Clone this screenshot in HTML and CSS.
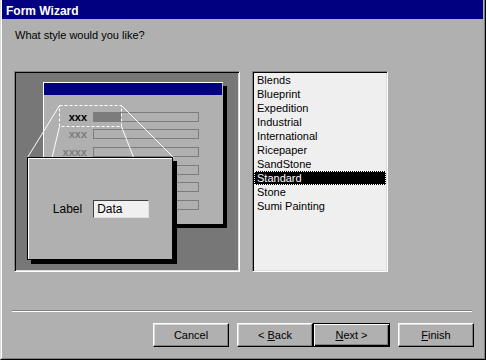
FILE: index.html
```html
<!DOCTYPE html>
<html lang="en">
<head>
    <meta charset="UTF-8">
    <title>Form Wizard</title>
    <link rel="stylesheet" href="styles.css">
</head>
<body>
    <div class="window">
        <div class="frame">
            <div class="titlebar">Form Wizard</div>
            <div class="content">
                <p class="prompt">What style would you like?</p>

                <div class="main">
                    <!-- Style preview -->
                    <div class="preview">
                        <div class="mock">
                            <div class="mock-title"></div>
                            <div class="mock-rows">
                                <div class="mock-row"><span class="mock-label current">xxx</span><span class="mock-field"><span class="mock-fill"></span></span></div>
                                <div class="mock-row"><span class="mock-label">xxx</span><span class="mock-field"></span></div>
                                <div class="mock-row"><span class="mock-label">xxxx</span><span class="mock-field"></span></div>
                                <!-- labels of the lower rows sit behind the zoom box -->
                                <div class="mock-row"><span class="mock-label"></span><span class="mock-field"></span></div>
                                <div class="mock-row"><span class="mock-label"></span><span class="mock-field"></span></div>
                                <div class="mock-row"><span class="mock-label"></span><span class="mock-field"></span></div>
                            </div>
                        </div>
                        <svg class="zoom-lines" width="224" height="199" viewBox="0 0 224 199">
                            <rect x="44.5" y="33.5" width="62" height="21" fill="none" stroke="#fff" stroke-dasharray="3 2"/>
                            <g stroke="#fff" stroke-width="1">
                                <line x1="44.5" y1="33.5" x2="12.5" y2="85.5"/>
                                <line x1="106.5" y1="33.5" x2="158.5" y2="85.5"/>
                                <line x1="44.5" y1="54.5" x2="12.5" y2="188"/>
                                <line x1="106.5" y1="54.5" x2="158.5" y2="188"/>
                            </g>
                        </svg>
                        <div class="zoom-box">
                            <span class="zoom-label">Label</span>
                            <span class="zoom-data">Data</span>
                        </div>
                    </div>

                    <!-- Style list -->
                    <ul class="style-list">
                        <li>Blends</li>
                        <li>Blueprint</li>
                        <li>Expedition</li>
                        <li>Industrial</li>
                        <li>International</li>
                        <li>Ricepaper</li>
                        <li>SandStone</li>
                        <li class="selected">Standard</li>
                        <li>Stone</li>
                        <li>Sumi Painting</li>
                    </ul>
                </div>

                <div class="separator"></div>

                <div class="buttons">
                    <button class="btn">Cancel</button>
                    <div class="btn-pair">
                        <button class="btn">&lt; <u>B</u>ack</button>
                        <button class="btn default"><u>N</u>ext &gt;</button>
                    </div>
                    <button class="btn"><u>F</u>inish</button>
                </div>
            </div>
        </div>
    </div>
</body>
</html>
```

FILE: styles.css
```css
body {
    margin: 0;
    font-family: "Liberation Sans", Arial, sans-serif;
    font-size: 11px;
    background-color: #b0b0b0;
}
.window {
    width: 486px;
    height: 360px;
    box-sizing: border-box;
    border-left: 1px solid #dcdcdc;
    border-right: 1px solid #000;
    border-bottom: 1px solid #000;
    background-color: #b0b0b0;
}
.frame {
    height: 100%;
    box-sizing: border-box;
    border-left: 1px solid #fff;
    border-right: 1px solid #808080;
    border-bottom: 1px solid #808080;
}
.titlebar {
    height: 19px;
    box-sizing: border-box;
    margin-right: 1px;
    padding: 3px 0 0 4px;
    line-height: 16px;
    background-color: #000080;
    color: #fff;
    font-weight: bold;
    font-size: 12px;
}
.content {
    padding: 0 10px 0 12px;
}
.prompt {
    margin: 10px 0 0 1px;
    line-height: 13px;
    color: #000;
}
.main {
    display: flex;
    gap: 12px;
    margin-top: 29px;
}
.preview {
    position: relative;
    width: 226px;
    height: 201px;
    box-sizing: border-box;
    padding: 10px 0 0 28px;
    border: 1px solid;
    border-color: #808080 #fff #fff #808080;
    box-shadow: inset 1px 1px 0 #000, inset -1px -1px 0 #dcdcdc;
    background-color: #777;
}
.mock {
    width: 180px;
    height: 142px;
    box-sizing: border-box;
    border-top: 1px solid #fff;
    border-left: 1px solid #fff;
    background-color: #b0b0b0;
    box-shadow: 4px 4px 0 #000;
}
.mock-title {
    height: 12px;
    margin-right: 1px;
    background-color: #000080;
}
.mock-rows {
    display: flex;
    flex-direction: column;
    padding-top: 13px;
}
.mock-row {
    display: flex;
    align-items: center;
    gap: 6px;
    height: 17.6px;
}
.mock-label {
    width: 43px;
    text-align: right;
    font-weight: bold;
    line-height: 10px;
    color: #7c7c7c;
}
.mock-label.current {
    color: #000;
}
.mock-field {
    display: flex;
    width: 106px;
    height: 10px;
    box-sizing: border-box;
    border: 1px solid #7c7c7c;
}
.mock-fill {
    width: 27px;
    background-color: #7c7c7c;
}
.zoom-lines {
    position: absolute;
    left: 0;
    top: 0;
}
.zoom-box {
    position: absolute;
    left: 12px;
    top: 85px;
    width: 146px;
    height: 103px;
    box-sizing: border-box;
    display: flex;
    align-items: center;
    justify-content: center;
    gap: 11px;
    padding-left: 2px;
    border: 1px solid #000;
    background-color: #b0b0b0;
    box-shadow: inset 1px 1px 0 #fff, 4px 4px 0 #000;
}
.zoom-data {
    width: 56px;
    height: 18px;
    box-sizing: border-box;
    padding-left: 3px;
    line-height: 16px;
    border: 1px solid;
    border-color: #404040 #e0e0e0 #e0e0e0 #404040;
    background-color: #f0f0f0;
    font-size: 12px;
}
.zoom-label {
    font-size: 12px;
}
.style-list {
    width: 136px;
    height: 201px;
    box-sizing: border-box;
    margin: 0;
    padding: 1px;
    list-style: none;
    border: 1px solid;
    border-color: #808080 #fff #fff #808080;
    box-shadow: inset 1px 1px 0 #000, inset -1px -1px 0 #dcdcdc;
    background-color: #efefef;
}
.style-list li {
    height: 14px;
    line-height: 14px;
    padding-left: 3px;
    color: #000;
}
.style-list li.selected {
    background-color: #000;
    color: #fff;
    outline: 1px dotted #fff;
    outline-offset: -1px;
}
.separator {
    margin: 38px 0 0 -2px;
    width: 460px;
    border-top: 1px solid #808080;
    border-bottom: 1px solid #fff;
}
.buttons {
    display: flex;
    justify-content: flex-end;
    gap: 8px;
    margin-top: 11px;
}
.btn-pair {
    display: flex;
}
.btn {
    width: 76px;
    height: 24px;
    padding: 0;
    box-sizing: border-box;
    font-family: inherit;
    font-size: 11px;
    color: #000;
    background-color: #b0b0b0;
    border: 1px solid;
    border-color: #fff #000 #000 #fff;
    box-shadow: inset -1px -1px 0 #808080, inset 1px 1px 0 #dcdcdc;
}
.btn.default {
    width: 77px;
    outline: 1px solid #000;
    outline-offset: -1px;
    border-color: #000;
    box-shadow: inset 1px 1px 0 #fff, inset -1px -1px 0 #000, inset -2px -2px 0 #808080;
}
.btn u {
    text-decoration: underline;
}
```
